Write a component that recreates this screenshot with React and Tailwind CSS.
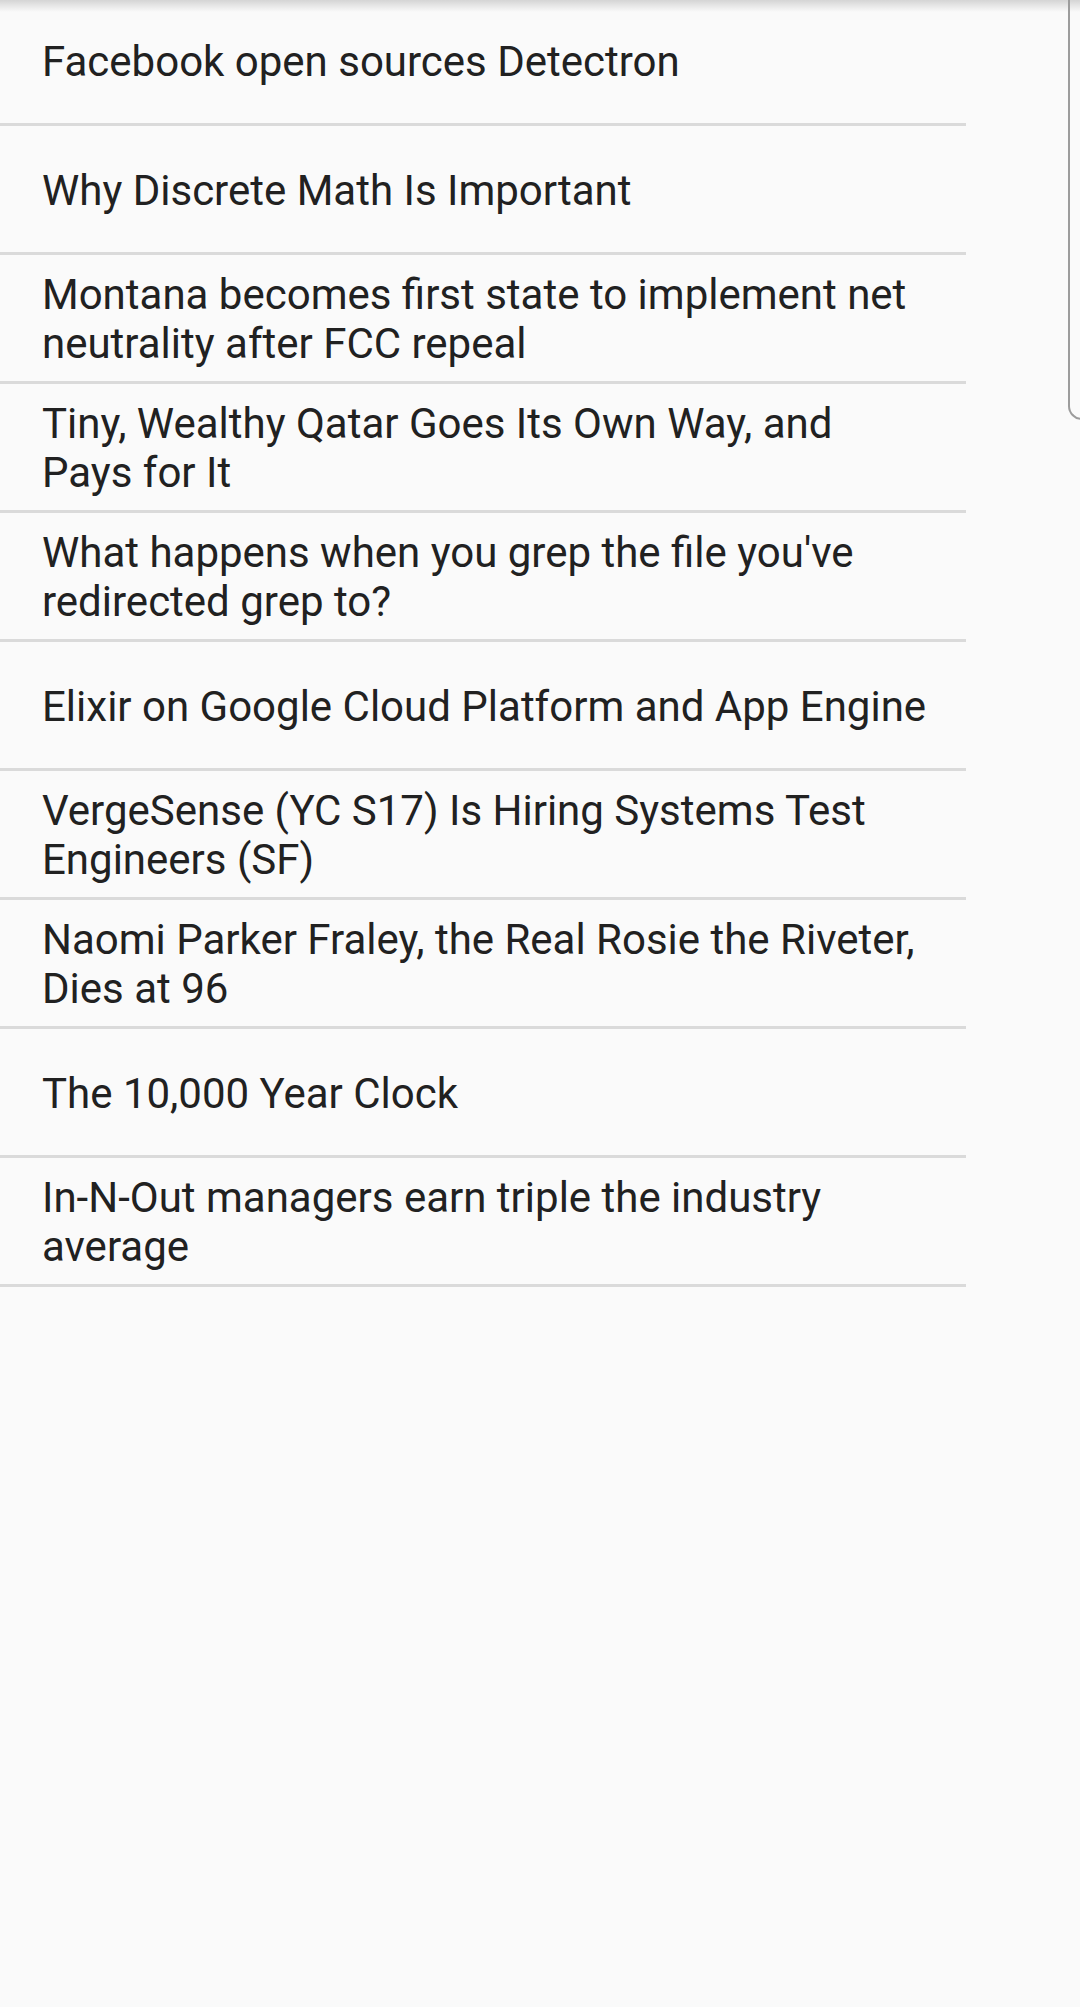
import React from "react";

const items = [
  "Facebook open sources Detectron",
  "Why Discrete Math Is Important",
  "Montana becomes first state to implement net neutrality after FCC repeal",
  "Tiny, Wealthy Qatar Goes Its Own Way, and Pays for It",
  "What happens when you grep the file you've redirected grep to?",
  "Elixir on Google Cloud Platform and App Engine",
  "VergeSense (YC S17) Is Hiring Systems Test Engineers (SF)",
  "Naomi Parker Fraley, the Real Rosie the Riveter, Dies at 96",
  "The 10,000 Year Clock",
  "In-N-Out managers earn triple the industry average",
];

export default function App() {
  return (
    <div
      className="relative w-[1080px] h-[2007px] overflow-hidden bg-[#fafafa] text-[#212121]"
      style={{ fontFamily: "Roboto, 'Noto Sans', sans-serif" }}
    >
      <ul className="-mt-[3px] w-[966px] flex flex-col">
        {items.map((t) => (
          <li
            key={t}
            className="h-[124px] pt-[2px] box-content border-b-[3px] border-[#dadada] flex items-center pl-[42px] pr-[37px]"
          >
            <span className="text-[42px] leading-[49px]">{t}</span>
          </li>
        ))}
      </ul>

      {/* top shadow */}
      <div className="absolute left-0 top-0 w-full h-[12px] bg-gradient-to-b from-black/15 to-transparent pointer-events-none" />

      {/* right edge panel */}
      <div className="absolute left-[1068px] top-[-20px] w-[40px] h-[440px] border-l-2 border-b-2 border-[#9c9c9c] rounded-bl-[14px]" />
    </div>
  );
}
